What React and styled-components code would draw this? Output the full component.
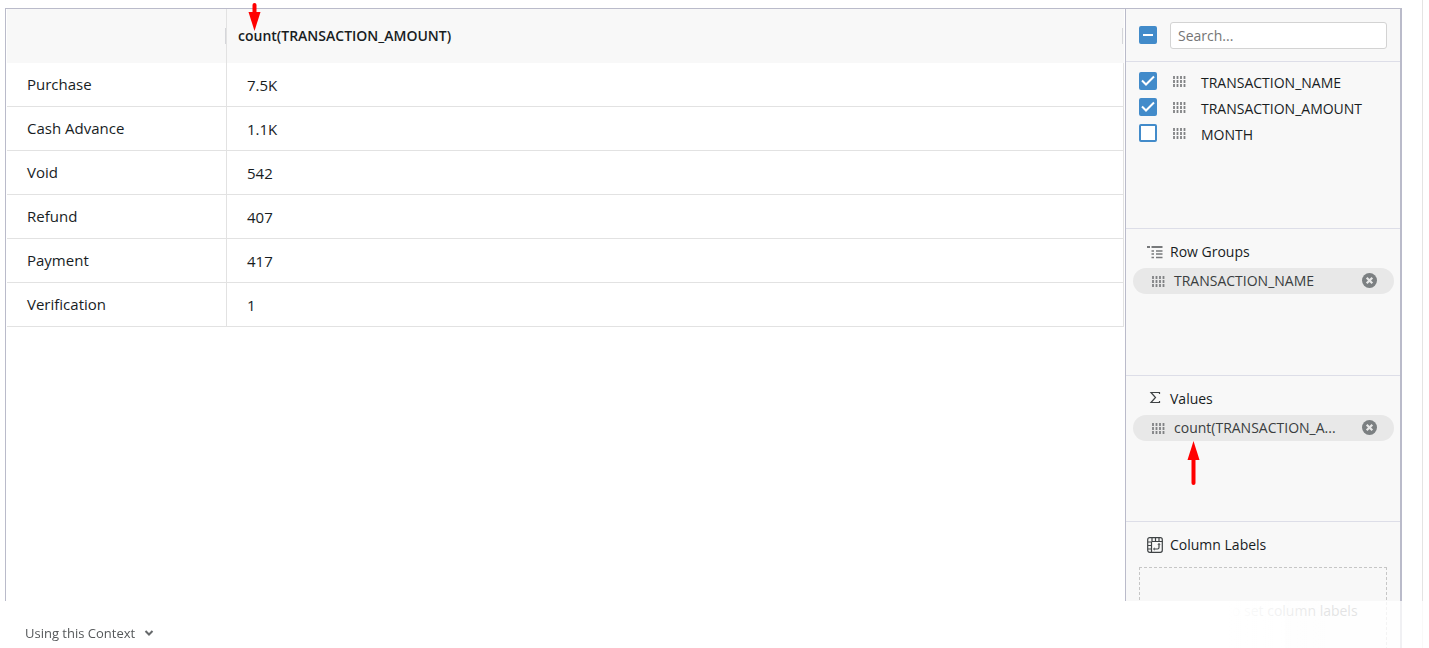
import React from "react";
import styled, { createGlobalStyle, css } from "styled-components";

const GlobalStyle = createGlobalStyle`
  *, *::before, *::after { box-sizing: border-box; }
  html, body { margin: 0; height: 100%; }
  body {
    background: #fff;
    color: #181d1f;
    font-family: "Open Sans", "Noto Sans", sans-serif;
    font-size: 14px;
    line-height: 20px;
    overflow: hidden;
  }
  #root { height: 100%; }
`;

const Page = styled.main`
  display: flex;
  height: 100%;
  margin-right: 6px;
  padding: 8px 20px 0 5px;
  border-right: 1px solid #e4e4e4;
`;

const Frame = styled.div`
  display: flex;
  flex: 1;
  min-width: 0;
  border: solid #babbca;
  border-width: 1px 2px 0 1px;
`;

const GridArea = styled.section`
  flex: 1;
  min-width: 0;
  padding: 0 1px;
`;

const Table = styled.table`
  width: 100%;
  border-collapse: separate;
  border-spacing: 0;
  table-layout: fixed;
`;

const HeadCell = styled.th`
  position: relative;
  height: 54px;
  width: ${(p) => p.$width || "auto"};
  padding: 0 0 0 11px;
  background: #f8f8f8;
  border-right: ${(p) => (p.$divider ? "1px solid #e2e2e2" : "0")};
  text-align: left;
  font-weight: 600;
`;

const HeadContent = styled.div`
  display: flex;
  align-items: center;
  justify-content: space-between;
`;

const ResizeHandle = styled.span`
  width: 1px;
  height: 16px;
  margin: 0 ${(p) => (p.$last ? "1px" : "0")} 0 auto;
  background: #d5d6da;
`;

const cell = css`
  height: 44px;
  border: solid #e2e2e2;
  border-width: 0 1px 1px 0;
  text-align: left;
  font-weight: 400;
  font-size: 15px;
`;
const RowName = styled.th`
  ${cell}
  padding: 0 20px 2px;
`;
const RowValue = styled.td`
  ${cell}
  padding: 0 20px;
`;

const Sidebar = styled.aside`
  width: 275px;
  flex: none;
  background: #f8f8f8;
  border-left: 1px solid #babbca;
`;

const SearchBar = styled.div`
  display: flex;
  align-items: center;
  gap: 13px;
  height: 53px;
  padding: 0 13px;
  border-bottom: 1px solid #dddee8;
`;

const SearchInput = styled.input`
  flex: 1;
  min-width: 0;
  height: 27px;
  padding: 0 7px;
  border: 1px solid #d3d3d3;
  border-radius: 3px;
  background: #fff;
  color: #181d1f;
  font: inherit;
  outline: none;
  &::placeholder { color: #757575; opacity: 1; }
`;

const CheckWrap = styled.span`
  position: relative;
  display: block;
  flex: none;
  width: 18px;
  height: 18px;
  svg {
    position: absolute;
    inset: 0;
    pointer-events: none;
  }
`;

const CheckInput = styled.input`
  appearance: none;
  display: block;
  width: 18px;
  height: 18px;
  margin: 0;
  border: 2px solid #428bca;
  border-radius: 2px;
  background: ${(p) => (p.$filled ? "#428bca" : "#fff")};
`;

const FieldList = styled.ul`
  height: 167px;
  margin: 0;
  padding: 6px 13px;
  list-style: none;
  border-bottom: 1px solid #dddee8;
`;

const FieldRow = styled.label`
  display: flex;
  align-items: center;
  height: 26px;
  > svg { margin: 0 15px 0 15px; }
`;

const FieldName = styled.span`
  padding-top: 4px;
`;

const Group = styled.section`
  height: ${(p) => p.$height || "146px"};
  padding-top: 10px;
  border-bottom: 1px solid #dddee8;
`;

const GroupTitle = styled.h2`
  display: flex;
  align-items: center;
  gap: 7px;
  height: 26px;
  margin: 0 0 3px;
  padding-left: 21px;
  font-size: 14px;
  font-weight: 400;
`;

const Pill = styled.div`
  position: relative;
  display: flex;
  align-items: center;
  gap: 9px;
  height: 26px;
  margin: 0 6px 0 7px;
  padding: 0 16px 0 18px;
  border-radius: 13px;
  background: #e8e8e8;
  color: #3a3e40;
`;

const PillText = styled.span`
  white-space: nowrap;
`;

const RemoveButton = styled.button`
  display: flex;
  margin-left: auto;
  padding: 0;
  border: 0;
  background: none;
`;

const DropZone = styled.div`
  height: 88px;
  margin: 9px 13px 0;
  padding-right: 10px;
  display: flex;
  align-items: center;
  justify-content: center;
  border: 1px dashed #c6c6c6;
  color: #7f8283;
`;

const HeaderArrow = styled.svg`
  position: absolute;
  left: 21px;
  top: -6px;
`;

const PillArrow = styled.svg`
  position: absolute;
  left: 54px;
  top: 26px;
`;

const Footer = styled.footer`
  position: fixed;
  inset: auto 0 0 0;
  display: flex;
  align-items: center;
  height: 47px;
  padding: 17px 25px 0;
  background: linear-gradient(90deg, #fff 86%, rgba(255, 255, 255, 0.78) 93%);
`;

const ContextButton = styled.button`
  display: flex;
  align-items: center;
  gap: 9px;
  padding: 0;
  border: 0;
  background: none;
  color: #55585a;
  font: inherit;
  font-size: 13px;
`;

const Grip = () => (
  <svg width="14" height="11" viewBox="0 0 14 11" aria-hidden="true">
    <path
      d="M2 0v11M5.500 0v11M9 0v11M12.500 0v11"
      stroke="#808284"
      strokeWidth="1.800"
      strokeDasharray="3 1"
    />
  </svg>
);

const Check = ({ state, label }) => (
  <CheckWrap>
    <CheckInput
      type="checkbox"
      aria-label={label}
      defaultChecked={state === "checked"}
      $filled={state !== "empty"}
    />
    <svg width="18" height="18" viewBox="0 0 18 18" fill="none" stroke="#fff" strokeWidth="2">
      {state === "checked" && <path d="M3 8.500l4 4 8-8" />}
      {state === "mixed" && <path d="M4 9h10" />}
    </svg>
  </CheckWrap>
);

const RowGroupIcon = () => (
  <svg width="16" height="14" viewBox="0 0 16 14" stroke="#77797b" aria-hidden="true">
    <path d="M0 2h3M4.500 2h11" strokeWidth="2" />
    <path d="M4.500 6h2.500M9 6h6.500M4.500 9h2.500M9 9h6.500M4.500 12.500h2.500M9 12.500h6.500" strokeWidth="1.500" />
  </svg>
);

const SigmaIcon = () => (
  <svg width="16" height="16" viewBox="0 0 16 16" fill="none" stroke="#3f4345" strokeWidth="1.200" aria-hidden="true">
    <path d="M12.500 3V1.500H4l4.500 5L4 11.500h8.500V10" />
  </svg>
);

const PivotIcon = () => (
  <svg width="16" height="16" viewBox="0 0 16 16" fill="none" stroke="#3f4345" strokeWidth="1.200" aria-hidden="true">
    <rect x="0.700" y="0.700" width="14.600" height="14.600" rx="2" />
    <path d="M4.500 4.500h11M4.500 4.500v11M5 1v3M8.500 1v3M12 1v3M1 5h3M1 8.500h3M1 12h3" />
    <path d="M12 6.500v4a1.500 1.500 0 0 1-1.500 1.500H6.500" />
    <path d="M10.800 8L12 6.500 13.200 8M8 10.800L6.500 12 8 13.200" strokeWidth="0.800" />
  </svg>
);

const CloseIcon = () => (
  <svg width="16" height="16" viewBox="0 0 16 16" aria-hidden="true">
    <circle cx="7.500" cy="7.500" r="7.500" fill="#7c8082" />
    <path d="M4.700 4.700l5.600 5.600M10.300 4.700l-5.600 5.600" stroke="#e8e8e8" strokeWidth="2.200" />
  </svg>
);

const ROWS = [
  ["Purchase", "7.5K"],
  ["Cash Advance", "1.1K"],
  ["Void", "542"],
  ["Refund", "407"],
  ["Payment", "417"],
  ["Verification", "1"],
];

const FIELDS = [
  ["TRANSACTION_NAME", "checked"],
  ["TRANSACTION_AMOUNT", "checked"],
  ["MONTH", "empty"],
];

const FieldPill = ({ name, children }) => (
  <Pill>
    <Grip />
    <PillText>{name}</PillText>
    <RemoveButton type="button" aria-label="Remove">
      <CloseIcon />
    </RemoveButton>
    {children}
  </Pill>
);

export default function App() {
  return (
    <>
      <GlobalStyle />
      <Page>
        <Frame>
          <GridArea>
            <Table>
              <thead>
                <tr>
                  <HeadCell $width="220px" $divider>
                    <HeadContent>
                      <ResizeHandle />
                    </HeadContent>
                  </HeadCell>
                  <HeadCell>
                    <HeadContent>
                      count(TRANSACTION_AMOUNT)
                      <ResizeHandle $last />
                    </HeadContent>
                    <HeaderArrow width="13" height="28" viewBox="0 0 13 28">
                      <path d="M6.500 2v10" stroke="#f00" strokeWidth="4" strokeLinecap="round" />
                      <path d="M.5 9h12l-6 19z" fill="#f00" />
                    </HeaderArrow>
                  </HeadCell>
                </tr>
              </thead>
              <tbody>
                {ROWS.map(([name, value]) => (
                  <tr key={name}>
                    <RowName scope="row">{name}</RowName>
                    <RowValue>{value}</RowValue>
                  </tr>
                ))}
              </tbody>
            </Table>
          </GridArea>
          <Sidebar>
            <SearchBar>
              <Check state="mixed" label="Select all columns" />
              <SearchInput type="text" placeholder="Search..." aria-label="Search columns" />
            </SearchBar>
            <FieldList>
              {FIELDS.map(([name, state]) => (
                <li key={name}>
                  <FieldRow>
                    <Check state={state} label={name} />
                    <Grip />
                    <FieldName>{name}</FieldName>
                  </FieldRow>
                </li>
              ))}
            </FieldList>
            <Group $height="147px">
              <GroupTitle><RowGroupIcon />Row Groups</GroupTitle>
              <FieldPill name="TRANSACTION_NAME" />
            </Group>
            <Group>
              <GroupTitle><SigmaIcon />Values</GroupTitle>
              <FieldPill name="count(TRANSACTION_A...">
                <PillArrow width="13" height="44" viewBox="0 0 13 44">
                  <path d="M6.500 16v26" stroke="#f00" strokeWidth="4" strokeLinecap="round" />
                  <path d="M.5 19h12l-6-19z" fill="#f00" />
                </PillArrow>
              </FieldPill>
            </Group>
            <Group>
              <GroupTitle><PivotIcon />Column Labels</GroupTitle>
              <DropZone>Drag here to set column labels</DropZone>
            </Group>
          </Sidebar>
        </Frame>
      </Page>
      <Footer>
        <ContextButton type="button">
          Using this Context
          <svg width="10" height="8" viewBox="0 0 10 8" fill="none" stroke="#66696b" strokeWidth="2" aria-hidden="true">
            <path d="M1.500 2l3.500 3.500L8.500 2" />
          </svg>
        </ContextButton>
      </Footer>
    </>
  );
}
